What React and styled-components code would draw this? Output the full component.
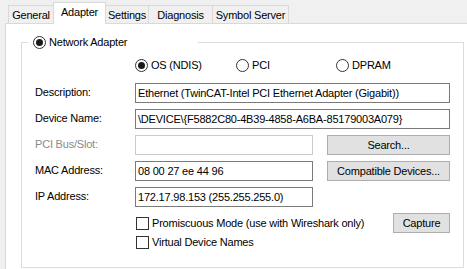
import React from "react";
import styled, { createGlobalStyle, css } from "styled-components";

const Global = createGlobalStyle`
  html, body { margin: 0; padding: 0; background: #f0f0f0; }
  body { font-family: "Liberation Sans", Arial, sans-serif; font-size: 11px; color: #000; letter-spacing: -0.2px; }
  * { box-sizing: border-box; }
`;

const Window = styled.div`
  width: 467px;
  height: 269px;
  overflow: hidden;
  background: #f0f0f0;
`;

const TabStrip = styled.div`
  display: flex;
  align-items: flex-end;
  height: 23px;
  padding-left: 9px;
  position: relative;
  z-index: 1;
`;

const Tab = styled.div`
  width: ${(p) => p.$w}px;
  height: 18px;
  margin-left: -1px;
  border: 1px solid #d9d9d9;
  border-bottom: none;
  background: #f0f0f0;
  display: flex;
  align-items: center;
  justify-content: center;
  padding-top: 1px;
  white-space: nowrap;
  ${(p) =>
    p.$active &&
    css`
      height: 22px;
      margin-bottom: -1px;
      background: #fff;
      position: relative;
      z-index: 2;
      padding-top: 0;
      padding-bottom: 4px;
    `}
`;

const Page = styled.div`
  margin-left: 5px;
  height: 246px;
  border-top: 1px solid #d9d9d9;
  border-left: 1px solid #d9d9d9;
  background: #fff;
  padding-top: 12px;
  padding-left: 15px;
`;

const Group = styled.fieldset`
  width: 443px;
  margin: 0;
  padding: 10px 0 18px 0;
  border: 1px solid #dcdcdc;
  min-width: 0;
`;

const Legend = styled.legend`
  width: 170px;
  margin-left: 6px;
  padding: 0 0 0 5px;
  height: 13px;
  line-height: 13px;
`;

const RadioLabel = styled.label`
  display: inline-flex;
  align-items: center;
  height: 13px;
  line-height: 13px;
  white-space: nowrap;
  width: ${(p) => (p.$w ? `${p.$w}px` : "auto")};
`;

const RadioCircle = styled.span`
  width: 13px;
  height: 13px;
  border-radius: 50%;
  border: 1px solid #333;
  background: #fff;
  margin-right: 3px;
  flex: none;
  display: flex;
  align-items: center;
  justify-content: center;
  &::after {
    content: "";
    width: 7px;
    height: 7px;
    border-radius: 50%;
    background: ${(p) => (p.$checked ? "#1a1a1a" : "transparent")};
  }
`;

const RadioRow = styled.div`
  display: flex;
  height: 13px;
  margin-left: 113px;
  margin-bottom: 11px;
`;

const FieldRow = styled.div`
  display: grid;
  grid-template-columns: 86px 178px 123px;
  column-gap: 14px;
  height: 20px;
  margin-left: 13px;
  margin-bottom: 6px;
  align-items: center;
`;

const Label = styled.div`
  color: ${(p) => (p.$disabled ? "#8a8a8a" : "#000")};
  line-height: 13px;
  padding-bottom: 2px;
  white-space: nowrap;
`;

const TextBox = styled.div`
  height: 20px;
  border: 1px solid ${(p) => (p.$disabled ? "#cccccc" : "#7a7a7a")};
  background: #fff;
  padding: 0 2px;
  line-height: 18px;
  white-space: nowrap;
  overflow: hidden;
  grid-column: ${(p) => (p.$wide ? "2 / span 2" : "auto")};
`;

const Button = styled.div`
  height: ${(p) => p.$h || 20}px;
  width: ${(p) => (p.$w ? `${p.$w}px` : "auto")};
  border: 1px solid #adadad;
  background: #e1e1e1;
  display: flex;
  align-items: center;
  justify-content: center;
  white-space: nowrap;
`;

const CheckRow = styled.div`
  display: flex;
  align-items: center;
  justify-content: space-between;
  width: 315px;
  height: ${(p) => p.$h}px;
  margin-left: 113px;
  margin-top: ${(p) => p.$mt}px;
`;

const CheckLabel = styled.label`
  display: inline-flex;
  align-items: center;
  line-height: 13px;
  white-space: nowrap;
  padding-left: 1px;
`;

const CheckBox = styled.span`
  width: 13px;
  height: 13px;
  border: 1px solid #333;
  background: #fff;
  margin-right: 3px;
  flex: none;
`;

const tabs = [
  { label: "General", w: 46 },
  { label: "Adapter", w: 53, active: true },
  { label: "Settings", w: 44 },
  { label: "Diagnosis", w: 65 },
  { label: "Symbol Server", w: 77 },
];

export default function App() {
  return (
    <Window>
      <Global />
      <TabStrip>
        {tabs.map((t) => (
          <Tab key={t.label} $w={t.w} $active={t.active}>
            {t.label}
          </Tab>
        ))}
      </TabStrip>
      <Page>
        <Group>
          <Legend>
            <RadioLabel>
              <RadioCircle $checked />
              Network Adapter
            </RadioLabel>
          </Legend>
          <RadioRow>
            <RadioLabel $w={101}>
              <RadioCircle $checked />
              OS (NDIS)
            </RadioLabel>
            <RadioLabel $w={100}>
              <RadioCircle />
              PCI
            </RadioLabel>
            <RadioLabel>
              <RadioCircle />
              DPRAM
            </RadioLabel>
          </RadioRow>
          <FieldRow>
            <Label>Description:</Label>
            <TextBox $wide>Ethernet (TwinCAT-Intel PCI Ethernet Adapter (Gigabit))</TextBox>
          </FieldRow>
          <FieldRow>
            <Label>Device Name:</Label>
            <TextBox $wide>\DEVICE\{"{"}F5882C80-4B39-4858-A6BA-85179003A079{"}"}</TextBox>
          </FieldRow>
          <FieldRow>
            <Label $disabled>PCI Bus/Slot:</Label>
            <TextBox $disabled />
            <Button>Search...</Button>
          </FieldRow>
          <FieldRow>
            <Label>MAC Address:</Label>
            <TextBox>08 00 27 ee 44 96</TextBox>
            <Button>Compatible Devices...</Button>
          </FieldRow>
          <FieldRow>
            <Label>IP Address:</Label>
            <TextBox>172.17.98.153 (255.255.255.0)</TextBox>
          </FieldRow>
          <CheckRow $h={20} $mt={1}>
            <CheckLabel>
              <CheckBox />
              Promiscuous Mode (use with Wireshark only)
            </CheckLabel>
            <Button $w={57}>Capture</Button>
          </CheckRow>
          <CheckRow $h={13} $mt={3}>
            <CheckLabel>
              <CheckBox />
              Virtual Device Names
            </CheckLabel>
          </CheckRow>
        </Group>
      </Page>
    </Window>
  );
}
